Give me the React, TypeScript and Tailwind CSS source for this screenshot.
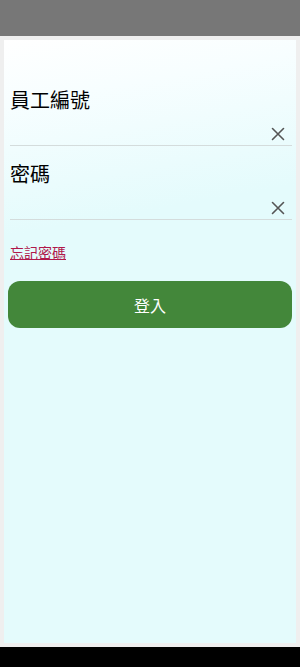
import { useState } from 'react';

function ClearIcon() {
  return (
    <svg width="14" height="14" viewBox="0 0 14 14" className="text-[#555]">
      <path d="M1.5 1.5 L12.5 12.5 M12.5 1.5 L1.5 12.5" stroke="currentColor" strokeWidth="1.6" strokeLinecap="round" />
    </svg>
  );
}

function Field({ label, type }: { label: string; type: string }) {
  const [value, setValue] = useState('');
  return (
    <div className="pl-[6px] pr-[4px]">
      <div className="text-[20px] leading-[24px] text-black">{label}</div>
      <div className="flex items-center border-b border-[#d4dcdc] h-[34px] pb-[4px]">
        <input
          type={type}
          value={value}
          onChange={(e) => setValue(e.target.value)}
          className="flex-1 min-w-0 bg-transparent outline-none text-[16px]"
        />
        <button className="mr-[7px] mt-[15px]" onClick={() => setValue('')}>
          <ClearIcon />
        </button>
      </div>
    </div>
  );
}

export default function App() {
  return (
    <div className="w-[300px] h-[667px] flex flex-col bg-black font-['Noto_Sans_CJK_TC','Noto_Sans',sans-serif]">
      <div className="h-[36px] bg-[#777777]" />
      <div className="h-[611px] bg-[#efefef] p-[4px] flex">
        <div className="flex-1 bg-[linear-gradient(170deg,#ffffff_0%,#f7feff_10%,#e4fbfc_30%,#e4fbfc_100%)] pt-[48px]">
          <Field label="員工編號" type="text" />
          <div className="h-[16px]" />
          <Field label="密碼" type="password" />
          <div className="px-[6px] mt-[19px]">
            <a href="#" className="text-[14px] leading-[18px] text-[#b0184a] underline">
              忘記密碼
            </a>
          </div>
          <div className="px-[4px] mt-[18px]">
            <button className="w-full h-[47px] rounded-[12px] bg-[#43873a] text-white text-[16px]">
              登入
            </button>
          </div>
        </div>
      </div>
      <div className="h-[20px] bg-black" />
    </div>
  );
}
